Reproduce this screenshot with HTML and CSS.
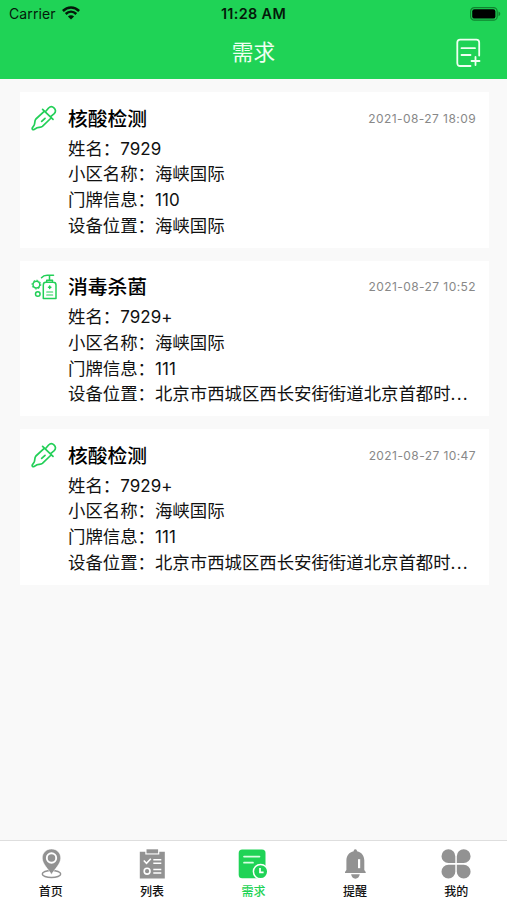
FILE: index.html
```html
<!DOCTYPE html>
<html lang="zh-CN">
<head>
<meta charset="utf-8">
<meta name="viewport" content="width=device-width, initial-scale=1">
<title>需求</title>
<link rel="stylesheet" href="styles.css">
</head>
<body>
<svg class="defs" width="0" height="0">
  <symbol id="dropper" viewBox="0 0 26 26">
    <g fill="none" stroke="currentColor" stroke-width="1.7" stroke-linecap="round" stroke-linejoin="round">
      <path d="M11.6 4.3 22 14.3M14.4 6.8 17.6 3C21.2-.4 27 4.8 23.2 8.6L19.4 11.8M13.2 6.4 4.9 14C3.2 16 4.3 18.1 3.1 20.2L1.4 22.7C.7 24 1.8 25.1 3.1 24.4L6.1 22.7C8 22 9.7 22.8 11.4 21.3L20.1 13M10.7 16.4 14 13.3"/>
    </g>
  </symbol>
  <symbol id="sanitizer" viewBox="0 0 26 26">
    <g fill="none" stroke="currentColor" stroke-width="1.5" stroke-linecap="round" stroke-linejoin="round">
      <circle cx="5.4" cy="10.6" r="3.4"/>
      <circle cx="5.4" cy="10.6" r="4.4" stroke-width="1" stroke-dasharray="1 2.45"/>
      <circle cx="6.8" cy="20" r="2.3"/>
      <path d="M10.5 3.7C12.5 1.2 14 1.3 16.5 1.3H22.5M18.5 1.5V6M15.7 8.3V6.2H21.5V8.3M14.8 8.3H22.2C24 8.3 25 9.4 25 11V24.4H12.3V11C12.3 9.3 13.2 8.3 14.8 8.3Z"/>
      <path d="M15.7 18H21.7M15.7 21H21.7" stroke-width="1.1"/>
      <path d="M17.5 13.2H19.9M18.7 12V14.4"/>
    </g>
  </symbol>
</svg>
<div class="screen">
  <header class="header">
    <div class="status">
      <div class="carrier"><span>Carrier</span>
        <svg width="18" height="14" viewBox="0 0 18 14" fill="none" stroke="#04190a" stroke-width="2.5"><path d="M.9 5C5.6.3 12.4.3 17.1 5M3.7 8C6.8 5 11.2 5 14.3 8"/><path d="M9 13.6 5.9 10.5C7.7 8.8 10.3 8.8 12.1 10.5Z" fill="#04190a" stroke="none"/></svg>
      </div>
      <div class="clock">11:28 AM</div>
      <svg class="battery" width="31" height="14" viewBox="0 0 31 14"><rect x=".6" y=".6" width="26.6" height="12.6" rx="3.8" fill="none" stroke="#10842f" stroke-width="1.2"/><rect x="2.2" y="2.2" width="23.2" height="9.4" rx="2.2" fill="#000"/><path d="M28.5 4.6C30.8 5.4 30.8 8.4 28.5 9.2Z" fill="#10842f"/></svg>
    </div>
    <div class="nav">
      <h1>需求</h1>
      <svg class="add" width="26" height="30" viewBox="0 0 26 30" fill="none" stroke="#effff2" stroke-width="1.8" stroke-linecap="round"><path d="M14.5 28H4.2C2.3 28 1.3 27 1.3 25.1V4.6C1.3 2.7 2.3 1.7 4.2 1.7H20.3C22.2 1.7 23.2 2.7 23.2 4.6V17.5M5.5 10.2H19M5.5 17H14.5M19.5 19V27M15.5 23H23.5"/></svg>
    </div>
  </header>
  <main class="list">
    <article class="card">
      <svg class="kind"><use href="#dropper"/></svg>
      <div class="body">
        <div class="head"><h2>核酸检测</h2><time>2021-08-27 18:09</time></div>
        <p>姓名：<span class="num">7929</span></p>
        <p>小区名称：海峡国际</p>
        <p>门牌信息：<span class="num">110</span></p>
        <p>设备位置：海峡国际</p>
      </div>
    </article>
    <article class="card">
      <svg class="kind"><use href="#sanitizer"/></svg>
      <div class="body">
        <div class="head"><h2>消毒杀菌</h2><time>2021-08-27 10:52</time></div>
        <p>姓名：<span class="num">7929+</span></p>
        <p>小区名称：海峡国际</p>
        <p>门牌信息：<span class="num">111</span></p>
        <p>设备位置：北京市西城区西长安街街道北京首都时<span class="dots">...</span></p>
      </div>
    </article>
    <article class="card">
      <svg class="kind"><use href="#dropper"/></svg>
      <div class="body">
        <div class="head"><h2>核酸检测</h2><time>2021-08-27 10:47</time></div>
        <p>姓名：<span class="num">7929+</span></p>
        <p>小区名称：海峡国际</p>
        <p>门牌信息：<span class="num">111</span></p>
        <p>设备位置：北京市西城区西长安街街道北京首都时<span class="dots">...</span></p>
      </div>
    </article>
  </main>
  <nav class="tabs">
    <a class="tab">
      <svg viewBox="0 0 30 30"><ellipse cx="15.5" cy="25" rx="9.2" ry="3.5" fill="none" stroke="#929292" stroke-width="1.5"/><path d="M15.5 0C10 0 6.3 4 6.3 9.1C6.3 14.8 12.2 20 15.5 25.5C18.8 20 24.7 14.8 24.7 9.1C24.7 4 21 0 15.5 0Z" fill="#929292" stroke="#fff" stroke-width=".5"/><circle cx="15.5" cy="9" r="4.7" fill="none" stroke="#fff" stroke-width="1.9"/></svg>
      <span>首页</span>
    </a>
    <a class="tab">
      <svg viewBox="0 0 30 30"><path d="M2.8 2.7H8.3V5.6H22.3V2.7H27.8V29.5H2.8Z" fill="#929292"/><path d="M9.5.3H21.1V4.4H9.5Z" fill="#929292"/><g fill="none" stroke="#fff" stroke-width="1.6"><path d="M6.8 11.5 9.5 14.3 13.8 9.8M16.3 10.8H24.3M16.3 14.2H24.3M16.3 20.5H24.3M16.3 24H24.3"/><circle cx="10.1" cy="22.2" r="2.9"/></g></svg>
      <span>列表</span>
    </a>
    <a class="tab active">
      <svg viewBox="0 0 30 30"><rect x=".7" y=".5" width="26.8" height="28.7" rx="3.5" fill="#1fd356"/><path d="M6 7.6H21.5M6 13.7H15" stroke="#d8ffe1" stroke-width="1.7" stroke-linecap="round"/><circle cx="22.6" cy="22.6" r="7.2" fill="#1fd356" stroke="#fff" stroke-width="1.5"/><path d="M22 19V23.3H25.6" fill="none" stroke="#fff" stroke-width="1.7"/></svg>
      <span>需求</span>
    </a>
    <a class="tab">
      <svg viewBox="0 0 30 30"><path d="M15.3 .2C16.4.2 17 1 17 2.2C21.6 3.1 24.3 6.8 24.3 11.4V21L25.7 23V24H5V23L6.4 21V11.4C6.4 6.8 9.1 3.1 13.7 2.2C13.7 1 14.2.2 15.3 .2ZM11.1 25.3H19.8C19.3 28.1 17.8 29.7 15.4 29.7C13.1 29.7 11.6 28.1 11.1 25.3Z" fill="#929292"/><rect x="18" y="10.2" width="2.2" height="9" fill="#fff"/></svg>
      <span>提醒</span>
    </a>
    <a class="tab">
      <svg viewBox="0 0 30 30" fill="#929292"><path d="M14.3 14.1H7.4A6.9 6.9 0 1 1 14.3 7.2ZM15.8 14.1V7.2A6.9 6.9 0 1 1 22.7 14.1ZM14.3 15.8V22.7A6.9 6.9 0 1 1 7.4 15.8ZM15.8 15.8H22.7A6.9 6.9 0 1 1 15.8 22.7Z"/></svg>
      <span>我的</span>
    </a>
  </nav>
</div>
</body>
</html>
```
FILE: styles.css
```css
* { box-sizing: border-box; margin: 0; padding: 0; }
body { font-family: Inter, "Noto Sans CJK SC", sans-serif; background: #f9f9f9; color: #111; }
.defs { display: block; position: absolute; }
.screen { height: 900px; display: flex; flex-direction: column; overflow: hidden; }
.header { height: 79px; flex: none; background: #1fd356; }
.status { height: 27px; display: grid; grid-template-columns: 1fr auto 1fr; align-items: center; padding: 0 7px 0 9px; color: #04190a; }
.carrier { display: flex; align-items: center; gap: 6px; font-size: 14px; line-height: 27px; letter-spacing: .1px; }
.carrier svg { margin-top: -2px; }
.clock { font-size: 14.4px; font-weight: 600; line-height: 27px; letter-spacing: .35px; margin-right: 2px; }
.battery { justify-self: end; margin-right: -1px; }
.nav { height: 50px; display: grid; grid-template-columns: 1fr auto 1fr; align-items: center; padding: 0 25px; }
.nav h1 { grid-column: 2; font-size: 21.7px; line-height: 50px; font-weight: 400; color: #effff2; }
.add { justify-self: end; margin-top: 1px; }
.list { flex: 1; display: flex; flex-direction: column; gap: 13px; padding: 13px 18px 0 20px; }
.card { height: 155.5px; flex: none; display: flex; background: #fff; padding: 11px 13px 0 11px; }
.kind { width: 26px; height: 26px; flex: none; margin: 2px 11px 0 0; color: #22cf57; }
.body { flex: 1; min-width: 0; }
.head { display: flex; justify-content: space-between; align-items: center; height: 31px; margin-bottom: 1.5px; }
.head h2 { font-size: 19.8px; line-height: 30px; font-weight: 500; color: #000; }
.head time { font-size: 12px; letter-spacing: .42px; color: #888; line-height: 30px; }
.body p { font-size: 17.4px; line-height: 25.8px; height: 25.8px; white-space: nowrap; font-weight: 400; }
.num { font-size: 17px; letter-spacing: .05px; }
.dots { font-size: 17px; letter-spacing: 1.2px; }
.tabs { height: 60px; flex: none; display: grid; grid-template-columns: repeat(5, 1fr); background: #fff; border-top: 1px solid #dedede; }
.tab { display: flex; flex-direction: column; align-items: center; padding-top: 7.5px; color: #111; }
.tab svg { width: 30px; height: 30px; flex: none; }
.tab span { font-size: 12px; font-weight: 500; line-height: 18px; margin-top: 4px; }
.tab.active { color: #1fd356; }
```
